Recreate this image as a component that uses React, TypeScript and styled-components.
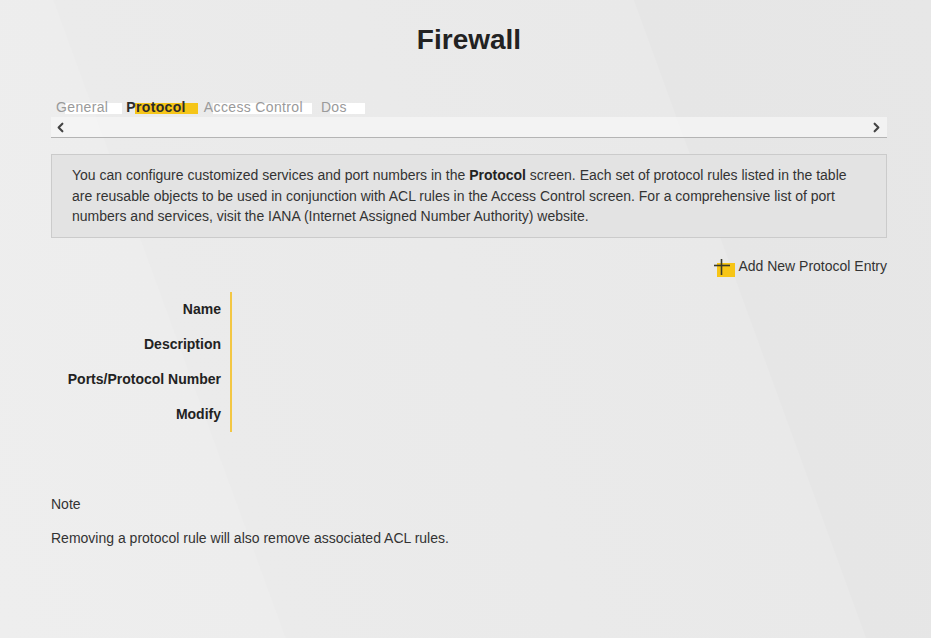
import React from "react";
import styled, { createGlobalStyle } from "styled-components";
import { ChevronLeft, ChevronRight } from "lucide-react";

const GlobalStyle = createGlobalStyle`
  html, body { margin: 0; padding: 0; }
  body {
    font-family: "Liberation Sans", Arial, sans-serif;
    color: #333;
    background: #e9e9e9;
  }
  * { box-sizing: border-box; }
`;

const Page = styled.div`
  min-height: 638px;
  padding: 24px 44px 40px 51px;
  background: linear-gradient(
    70deg,
    #eeeeee 0%,
    #ededed 24.5%,
    #ebebeb 24.6%,
    #eaeaea 50%,
    #e9e9e9 74.4%,
    #e6e6e6 74.5%,
    #e7e7e7 100%
  );
`;

const Title = styled.h1`
  margin: 0;
  font-size: 28px;
  line-height: 32px;
  font-weight: 700;
  color: #222;
  text-align: center;
`;

const TabRow = styled.div`
  display: flex;
  gap: 18px;
  margin-top: 43px;
  padding-left: 5px;
`;

const Tab = styled.div<{ $active?: boolean; $extra: number }>`
  position: relative;
  font-size: 14px;
  line-height: 16px;
  letter-spacing: 0.35px;
  color: ${(p) => (p.$active ? "#2b2b2b" : "#9a9a9a")};
  font-weight: ${(p) => (p.$active ? 700 : 400)};
  z-index: 0;
  &::after {
    content: "";
    position: absolute;
    left: 9px;
    right: ${(p) => -p.$extra}px;
    top: 4px;
    height: 11px;
    background: ${(p) => (p.$active ? "#f5c518" : "#ffffff")};
    z-index: -1;
  }
`;

const ScrollBar = styled.div`
  display: flex;
  justify-content: space-between;
  align-items: center;
  height: 21px;
  margin-top: 2px;
  padding: 0 3px 0 2px;
  background: rgba(246, 246, 246, 0.7);
  border-bottom: 1px solid #b4b4b4;
  color: #444;
`;

const InfoBox = styled.div`
  margin-top: 16px;
  padding: 10px 20px 10px 20px;
  background: #e3e3e3;
  border: 1px solid #cbcbcb;
  font-size: 14px;
  line-height: 20.5px;
  color: #333;
  b { color: #222; }
`;

const AddRow = styled.div`
  display: flex;
  justify-content: flex-end;
  margin-top: 20px;
`;

const AddButton = styled.button`
  display: flex;
  align-items: center;
  gap: 3px;
  height: 16px;
  border: none;
  background: none;
  padding: 0;
  font-family: inherit;
  font-size: 14px;
  line-height: 16px;
  color: #333;
  cursor: pointer;
`;

const Table = styled.div`
  display: grid;
  grid-template-columns: 181px 1fr;
  margin-top: 18px;
`;

const LabelCol = styled.div`
  border-right: 2px solid #f3c744;
  display: flex;
  flex-direction: column;
`;

const Label = styled.div`
  height: 35px;
  display: flex;
  align-items: center;
  justify-content: flex-end;
  padding-right: 9px;
  font-size: 14px;
  font-weight: 700;
  color: #222;
`;

const NoteTitle = styled.div`
  margin-top: 64px;
  font-size: 14px;
  line-height: 16px;
  color: #333;
`;

const NoteText = styled.div`
  margin-top: 18px;
  font-size: 14px;
  line-height: 16px;
  color: #333;
`;

const PlusIcon = () => (
  <svg width="21" height="22" viewBox="0 0 21 22" style={{ flexShrink: 0 }}>
    <rect x="3" y="8" width="18" height="14" fill="#f7c516" />
    <line x1="0" y1="10.5" x2="16" y2="10.5" stroke="#3a3a2a" strokeWidth="1.6" />
    <line x1="7.5" y1="4" x2="7.5" y2="20" stroke="#3a3a2a" strokeWidth="1.6" />
  </svg>
);

const tabs = [
  { name: "General", extra: 14 },
  { name: "Protocol", extra: 12, active: true },
  { name: "Access Control", extra: 9 },
  { name: "Dos", extra: 18 },
];

const labels = ["Name", "Description", "Ports/Protocol Number", "Modify"];

export default function App() {
  return (
    <>
      <GlobalStyle />
      <Page>
        <Title>Firewall</Title>
        <TabRow>
          {tabs.map((t) => (
            <Tab key={t.name} $active={t.active} $extra={t.extra}>
              {t.name}
            </Tab>
          ))}
        </TabRow>
        <ScrollBar>
          <ChevronLeft size={15} strokeWidth={3.4} />
          <ChevronRight size={15} strokeWidth={3.4} />
        </ScrollBar>
        <InfoBox>
          You can configure customized services and port numbers in the <b>Protocol</b> screen. Each set
          of protocol rules listed in the table are reusable objects to be used in conjunction with ACL
          rules in the Access Control screen. For a comprehensive list of port numbers and services,
          visit the IANA (Internet Assigned Number Authority) website.
        </InfoBox>
        <AddRow>
          <AddButton>
            <PlusIcon />
            Add New Protocol Entry
          </AddButton>
        </AddRow>
        <Table>
          <LabelCol>
            {labels.map((l) => (
              <Label key={l}>{l}</Label>
            ))}
          </LabelCol>
          <div />
        </Table>
        <NoteTitle>Note</NoteTitle>
        <NoteText>Removing a protocol rule will also remove associated ACL rules.</NoteText>
      </Page>
    </>
  );
}
